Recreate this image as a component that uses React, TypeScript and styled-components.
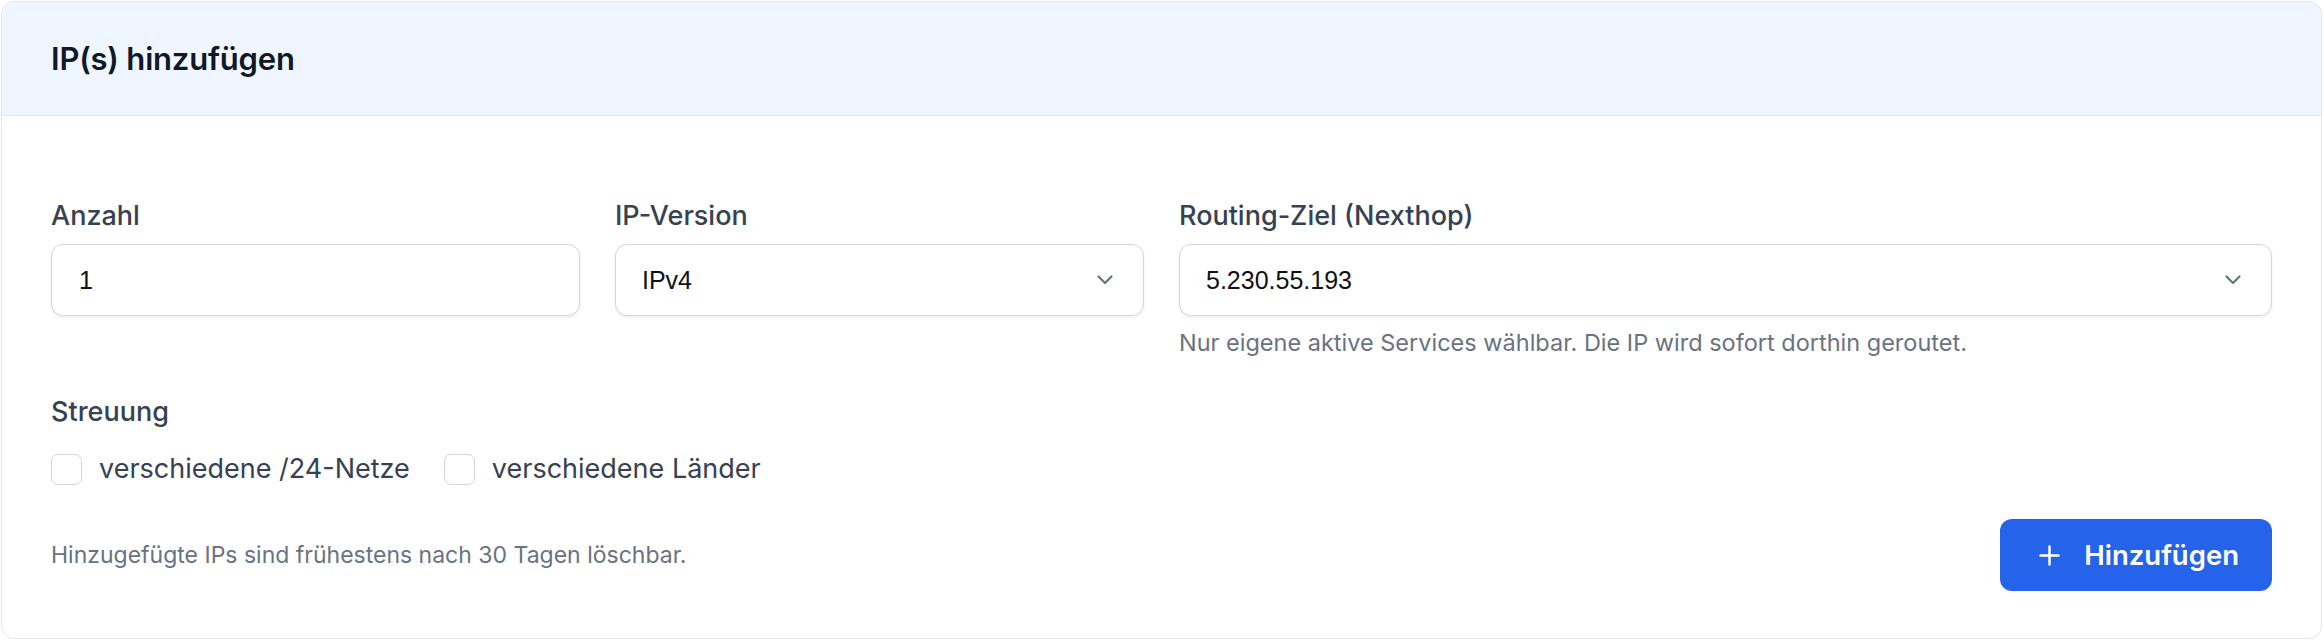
import React, {useState} from 'react';
import styled, {createGlobalStyle} from "styled-components";

const GlobalStyle = createGlobalStyle`
  * { box-sizing: border-box; }
  body {
    margin: 0;
    background: #ffffff;
    font-family: Inter, "Noto Sans", "Liberation Sans", sans-serif;
  }
`

const ChevronDown = () => (
    <svg width="30" height="30" viewBox="0 0 30 30" fill="none">
        <path d="M8.5 11.5 15 18l6.5-6.5" stroke="#6b7280" strokeWidth="2.2" strokeLinecap="round" strokeLinejoin="round"/>
    </svg>
);

const PlusIcon = () => (
    <svg width="27" height="27" viewBox="0 0 24 24" fill="none">
        <path d="M12 4v16M4 12h16" stroke="#ffffff" strokeWidth="2.2" strokeLinecap="round"/>
    </svg>
);

const App = () => {
    const [count, setCount] = useState("1");
    const [version, setVersion] = useState("IPv4");
    const [nexthop, setNexthop] = useState("5.230.55.193");
    const [spread, setSpread] = useState({nets: false, countries: false});

    return (
        <>
            <GlobalStyle/>
            <Card>
                <Header>
                    <Title>IP(s) hinzufügen</Title>
                </Header>
                <Body>
                    <FieldGrid>
                        <Field>
                            <Label>Anzahl</Label>
                            <TextInput value={count} onChange={(e) => setCount(e.target.value)}/>
                        </Field>
                        <Field>
                            <Label>IP-Version</Label>
                            <SelectBox>
                                <Select value={version} onChange={(e) => setVersion(e.target.value)}>
                                    <option>IPv4</option>
                                    <option>IPv6</option>
                                </Select>
                                <ChevronSlot><ChevronDown/></ChevronSlot>
                            </SelectBox>
                        </Field>
                        <Field $span={2}>
                            <Label>Routing-Ziel (Nexthop)</Label>
                            <SelectBox>
                                <Select value={nexthop} onChange={(e) => setNexthop(e.target.value)}>
                                    <option>5.230.55.193</option>
                                </Select>
                                <ChevronSlot><ChevronDown/></ChevronSlot>
                            </SelectBox>
                            <Hint>Nur eigene aktive Services wählbar. Die IP wird sofort dorthin geroutet.</Hint>
                        </Field>
                    </FieldGrid>

                    <Field>
                        <Label>Streuung</Label>
                        <CheckRow>
                            <CheckLabel>
                                <CheckBox type="checkbox" checked={spread.nets}
                                          onChange={() => setSpread({...spread, nets: !spread.nets})}/>
                                verschiedene /24-Netze
                            </CheckLabel>
                            <CheckLabel>
                                <CheckBox type="checkbox" checked={spread.countries}
                                          onChange={() => setSpread({...spread, countries: !spread.countries})}/>
                                verschiedene Länder
                            </CheckLabel>
                        </CheckRow>
                    </Field>

                    <Footer>
                        <Note>Hinzugefügte IPs sind frühestens nach 30 Tagen löschbar.</Note>
                        <AddButton><PlusIcon/>Hinzufügen</AddButton>
                    </Footer>
                </Body>
            </Card>
        </>
    );
};

export default App;

const Card = styled.div`
  margin: 1px 2px 0 1px;
  border: 1.5px solid #e5e7eb;
  border-radius: 13px;
  overflow: hidden;
  background: #ffffff;
`
const Header = styled.div`
  height: 114px;
  background: #eff6ff;
  border-bottom: 1.5px solid #e5e7eb;
  display: flex;
  align-items: center;
  padding: 0 49px;
`
const Title = styled.h2`
  margin: 0;
  font-size: 31px;
  font-weight: 600;
  line-height: 40px;
  letter-spacing: -0.2px;
  color: #111827;
`
const Body = styled.div`
  padding: 82px 49px 47px;
  display: flex;
  flex-direction: column;
  gap: 36px;
`
const FieldGrid = styled.div`
  display: grid;
  grid-template-columns: repeat(4, 1fr);
  gap: 35px;
`
const Field = styled.div<{ $span?: number }>`
  display: flex;
  flex-direction: column;
  grid-column: span ${p => p.$span || 1};
`
const Label = styled.label`
  font-size: 27px;
  font-weight: 500;
  line-height: 36px;
  color: #374151;
  margin-bottom: 10px;
`
const TextInput = styled.input`
  height: 72px;
  border: 1.5px solid #d1d5db;
  border-radius: 12px;
  padding: 0 27px;
  font-family: "Liberation Sans", Arial, sans-serif;
  font-size: 25px;
  color: #111111;
  box-shadow: 0 1.5px 3px rgba(0, 0, 0, 0.06);
  outline: none;
`
const SelectBox = styled.div`
  position: relative;
`
const Select = styled.select`
  width: 100%;
  height: 72px;
  border: 1.5px solid #d1d5db;
  border-radius: 12px;
  padding: 0 60px 0 26px;
  font-family: "Liberation Sans", Arial, sans-serif;
  font-size: 25px;
  color: #111111;
  background: #ffffff;
  box-shadow: 0 1.5px 3px rgba(0, 0, 0, 0.06);
  appearance: none;
  outline: none;
`
const ChevronSlot = styled.span`
  position: absolute;
  right: 24px;
  top: 50%;
  transform: translateY(-50%);
  display: flex;
  pointer-events: none;
`
const Hint = styled.p`
  margin: 12px 0 0;
  font-size: 23.5px;
  line-height: 30px;
  color: #6b7280;
`
const CheckRow = styled.div`
  display: flex;
  gap: 34px;
  margin-top: 11px;
`
const CheckLabel = styled.label`
  display: flex;
  align-items: center;
  gap: 17px;
  font-size: 27px;
  line-height: 36px;
  color: #374151;
  cursor: pointer;
`
const CheckBox = styled.input`
  appearance: none;
  width: 31px;
  height: 31px;
  margin: 0;
  border: 1.5px solid #d1d5db;
  border-radius: 7px;
  background: #ffffff;
  cursor: pointer;
`
const Footer = styled.div`
  display: flex;
  align-items: center;
  justify-content: space-between;
  margin-top: -4px;
`
const Note = styled.p`
  margin: 0;
  font-size: 23px;
  line-height: 30px;
  color: #6b7280;
`
const AddButton = styled.button`
  height: 72px;
  padding: 0 33px 0 36px;
  display: flex;
  align-items: center;
  gap: 21px;
  border: none;
  border-radius: 12px;
  background: #2563eb;
  color: #ffffff;
  font-family: inherit;
  font-size: 27.5px;
  font-weight: 600;
  cursor: pointer;
`
